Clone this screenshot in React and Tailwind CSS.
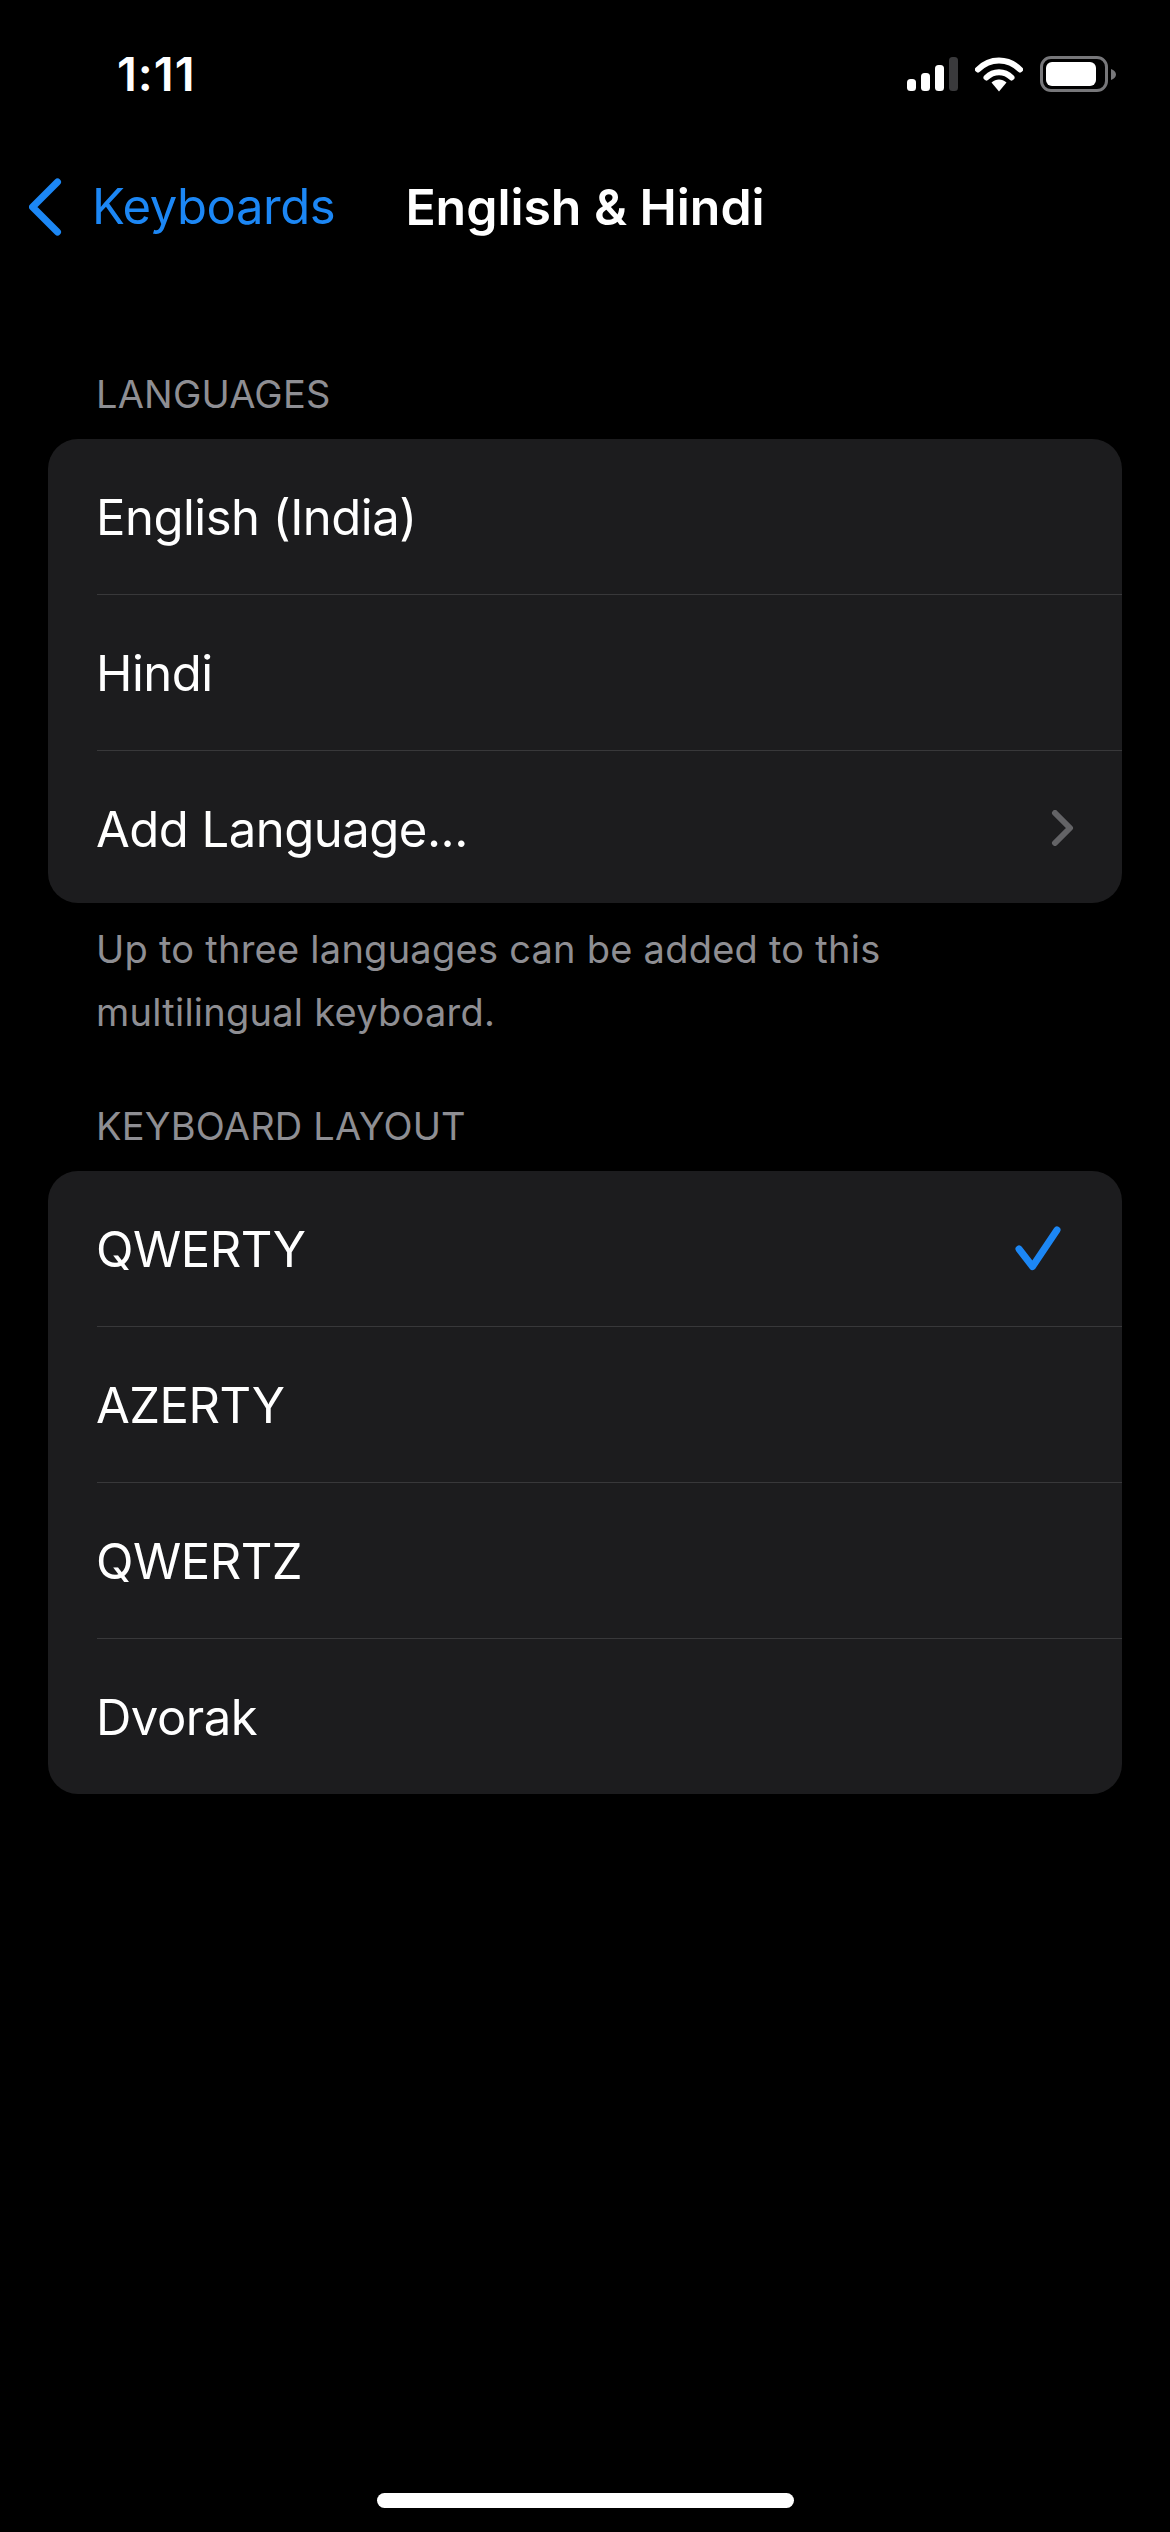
const FONT = "font-['Inter','Liberation_Sans',sans-serif]";

function StatusIcons() {
  return (
    <div className="flex items-center">
      <svg width="51" height="34" viewBox="0 0 51 34" className="mr-[17px]">
        <rect x="0" y="22" width="9" height="12" rx="3.5" fill="#fff" />
        <rect x="14" y="16" width="9" height="18" rx="3.5" fill="#fff" />
        <rect x="28" y="8" width="9" height="26" rx="3.5" fill="#fff" />
        <rect x="42" y="0" width="9" height="34" rx="3.5" fill="#3a3a3c" />
      </svg>
      <svg width="48" height="36" viewBox="0 0 48 36" className="mr-[17px]">
        <path d="M3 13.5 C15 1.5 33 1.5 45 13.5" fill="none" stroke="#fff" strokeWidth="6" strokeLinecap="round" />
        <path d="M11.5 21.5 C18.5 14.5 29.5 14.5 36.5 21.5" fill="none" stroke="#fff" strokeWidth="6" strokeLinecap="round" />
        <path d="M16.5 26.5 C21 22.5 27 22.5 31.5 26.5 L24 35.5 Z" fill="#fff" />
      </svg>
      <div className="flex items-center">
        <div className="flex h-[36px] w-[68px] items-center rounded-[11px] border-[3.5px] border-[#77777a] px-[3px]">
          <div className="h-[24px] w-[50px] rounded-[6px] bg-white" />
        </div>
        <svg width="5" height="11" viewBox="0 0 5 11" className="ml-[3px]">
          <path d="M0 0 C3 1 5 3 5 5.5 C5 8 3 10 0 11 Z" fill="#77777a" />
        </svg>
      </div>
    </div>
  );
}

function Row({ label, trailing, size }) {
  return (
    <div className="pl-[49px]">
      <div className={`flex items-center justify-between text-[49px] tracking-[-0.5px] text-white ${size}`}>
        <span className="-ml-[1px]">{label}</span>
        {trailing}
      </div>
    </div>
  );
}

const ChevronRight = (
  <svg width="24" height="36" viewBox="0 0 24 36" className="-mt-[4px] mr-[47px]">
    <path d="M4 3 L19 18 L4 33" fill="none" stroke="#636366" strokeWidth="6" strokeLinecap="round" strokeLinejoin="round" />
  </svg>
);

const Check = (
  <svg width="48" height="46" viewBox="0 0 48 46" className="-mt-[2px] mr-[60px]">
    <path d="M5 23 L18.5 40.5 L43 4" fill="none" stroke="#1c87f5" strokeWidth="7" strokeLinecap="round" strokeLinejoin="round" />
  </svg>
);

const ROW = "h-[156px] border-b border-[#38383a] pt-[3px]";
const ROW_LAST = "h-[155px] pt-[3px]";
const ROW_SHORT = "h-[152px] pt-[6px]";

function Section({ title, rows, footer }) {
  return (
    <section>
      <h2 className="pb-[21px] pl-[96px] text-[38px] leading-[48px] font-normal tracking-[0.2px] text-[#8e8e93]">
        {title}
      </h2>
      <div className="mx-[48px] overflow-hidden rounded-[30px] bg-[#1c1c1e]">
        {rows.map((r) => (
          <Row key={r.label} label={r.label} trailing={r.trailing} size={r.size || ROW} />
        ))}
      </div>
      {footer && (
        <p className="mt-[15px] w-[900px] pl-[96px] text-[38px] leading-[63px] tracking-[0.25px] text-[#8e8e93]">
          {footer}
        </p>
      )}
    </section>
  );
}

export default function App() {
  return (
    <div className={`flex h-[2532px] w-[1170px] flex-col bg-black ${FONT}`}>
      {/* Status bar */}
      <div className="flex h-[148px] shrink-0 items-center justify-between pr-[54px] pl-[117px]">
        <span className="text-[47px] font-semibold tracking-[1px] text-white">1:11</span>
        <StatusIcons />
      </div>

      {/* Nav */}
      <div className="grid h-[118px] shrink-0 grid-cols-[1fr_auto_1fr] items-center">
        <div className="flex items-center pl-[29px] text-[49px] tracking-[-0.45px] text-[#1c87f5]">
          <svg width="34" height="58" viewBox="0 0 34 58" className="mr-[29px]">
            <path d="M28.5 4 L3.5 29 L28.5 54" fill="none" stroke="#1c87f5" strokeWidth="7" strokeLinecap="round" strokeLinejoin="round" />
          </svg>
          <span>Keyboards</span>
        </div>
        <span className="text-[50px] font-semibold tracking-[-0.05px] text-white">English &amp; Hindi</span>
        <div />
      </div>

      <div className="mt-[104px]">
        <Section
          title="LANGUAGES"
          rows={[
            { label: "English (India)" },
            { label: "Hindi" },
            { label: "Add Language...", trailing: ChevronRight, size: ROW_SHORT },
          ]}
          footer="Up to three languages can be added to this multilingual keyboard."
        />
      </div>

      <div className="mt-[58px]">
        <Section
          title="KEYBOARD LAYOUT"
          rows={[
            { label: "QWERTY", trailing: Check },
            { label: "AZERTY" },
            { label: "QWERTZ" },
            { label: "Dvorak", size: ROW_LAST },
          ]}
        />
      </div>

      {/* Home indicator */}
      <div className="mt-auto flex justify-center pb-[24px]">
        <div className="h-[15px] w-[417px] rounded-full bg-white" />
      </div>
    </div>
  );
}
